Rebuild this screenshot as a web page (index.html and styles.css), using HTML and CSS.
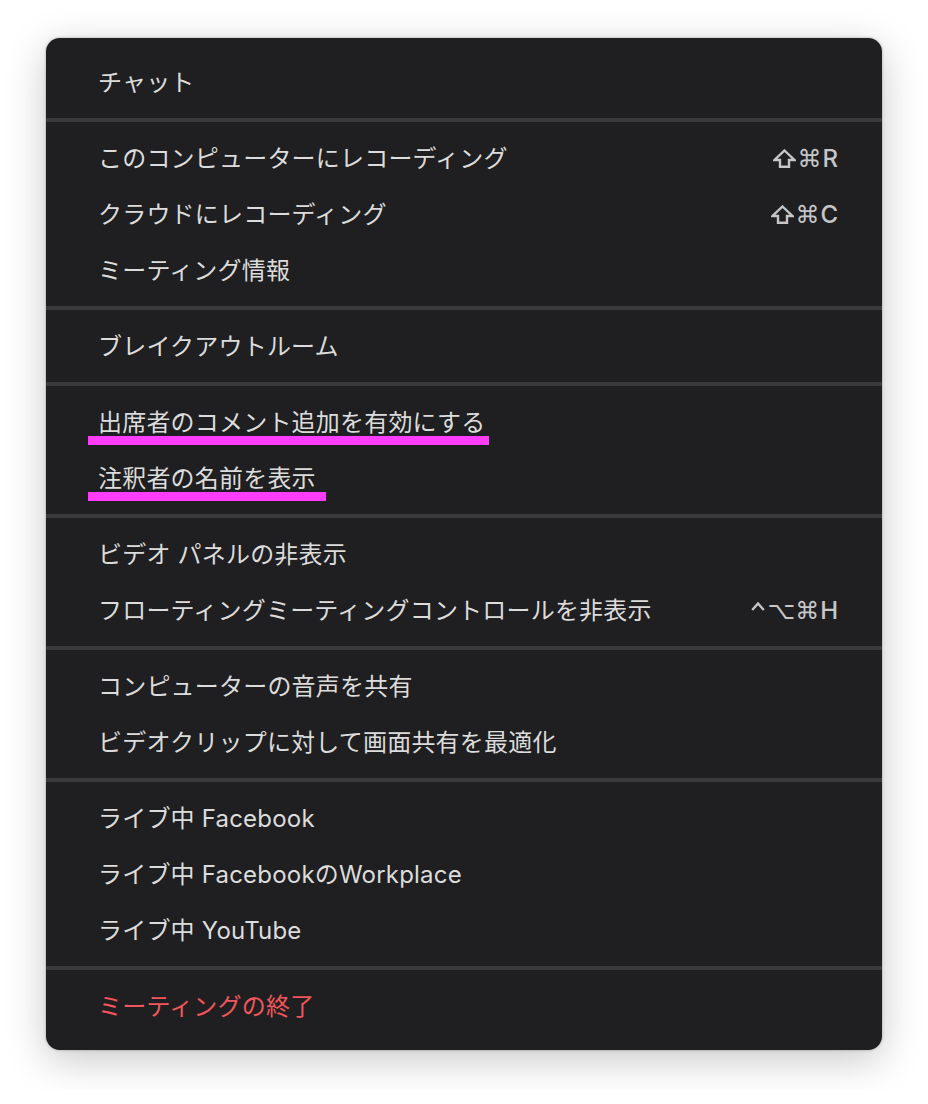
FILE: index.html
```html
<!DOCTYPE html>
<html lang="ja">
<head>
<meta charset="utf-8">
<link rel="stylesheet" href="styles.css">
</head>
<body>
<div class="menu">
  <div class="row"><span class="label">チャット</span></div>
  <div class="sep"></div>
  <div class="row"><span class="label">このコンピューターにレコーディング</span><span class="key"><svg class="shift" viewBox="0 0 23 19"><path d="M11.5 1.5 L21.5 11 L16 11 L16 17.8 L7 17.8 L7 11 L1.5 11 Z"/></svg><span class="sym">⌘</span>R</span></div>
  <div class="row"><span class="label">クラウドにレコーディング</span><span class="key"><svg class="shift" viewBox="0 0 23 19"><path d="M11.5 1.5 L21.5 11 L16 11 L16 17.8 L7 17.8 L7 11 L1.5 11 Z"/></svg><span class="sym">⌘</span>C</span></div>
  <div class="row"><span class="label">ミーティング情報</span></div>
  <div class="sep"></div>
  <div class="row"><span class="label">ブレイクアウトルーム</span></div>
  <div class="sep"></div>
  <div class="row"><span class="label marked mark-long">出席者のコメント追加を有効にする</span></div>
  <div class="row"><span class="label marked mark-short">注釈者の名前を表示</span></div>
  <div class="sep"></div>
  <div class="row"><span class="label">ビデオ パネルの非表示</span></div>
  <div class="row"><span class="label">フローティングミーティングコントロールを非表示</span><span class="key"><svg class="ctrl" viewBox="0 0 14 9"><path d="M1.2 8 L7 1.5 L12.8 8"/></svg><span class="sym">⌥⌘</span>H</span></div>
  <div class="sep"></div>
  <div class="row"><span class="label">コンピューターの音声を共有</span></div>
  <div class="row"><span class="label">ビデオクリップに対して画面共有を最適化</span></div>
  <div class="sep"></div>
  <div class="row"><span class="label">ライブ中 Facebook</span></div>
  <div class="row"><span class="label">ライブ中 FacebookのWorkplace</span></div>
  <div class="row"><span class="label">ライブ中 YouTube</span></div>
  <div class="sep"></div>
  <div class="row"><span class="label danger">ミーティングの終了</span></div>
</div>
</body>
</html>
```

FILE: styles.css
```css
html, body {
  margin: 0;
  padding: 0;
  background: #ffffff;
}
body {
  padding: 38px 46px 40px 46px;
  font-family: Inter, "Noto Sans CJK JP", sans-serif;
}
.menu {
  width: 836px;
  box-sizing: border-box;
  background: #1f1f21;
  border-radius: 14px;
  padding: 15px 0 17px 0;
  box-shadow: 0 10px 40px rgba(0, 0, 0, 0.22), 0 0 3px rgba(0, 0, 0, 0.3);
}
.row {
  height: 56px;
  box-sizing: border-box;
  padding: 3px 44px 0 52px;
  display: flex;
  align-items: center;
  justify-content: space-between;
}
.label {
  font-size: 24px;
  color: #dcdcdc;
  line-height: 1;
  letter-spacing: 0.2px;
  position: relative;
  white-space: nowrap;
}
.key {
  display: flex;
  align-items: center;
  font-size: 24px;
  font-weight: 500;
  color: #c6c6c8;
  line-height: 1;
  white-space: nowrap;
}
.sym {
  font-family: "DejaVu Sans", sans-serif;
  font-size: 24px;
  font-weight: 400;
  margin-right: 1px;
}
.shift {
  width: 23px;
  height: 19px;
  margin-right: 1px;
  fill: none;
  stroke: #c6c6c8;
  stroke-width: 2.4;
  stroke-linejoin: miter;
}
.ctrl {
  width: 14px;
  height: 9px;
  margin-right: 2px;
  margin-bottom: 8px;
  fill: none;
  stroke: #c6c6c8;
  stroke-width: 2.4;
}
.danger {
  color: #f2555a;
}
.marked::after {
  content: "";
  position: absolute;
  left: -10px;
  top: 25px;
  height: 9px;
  background: #fd3dfb;
}
.mark-long::after {
  width: 401px;
}
.mark-short::after {
  width: 238px;
}
.sep {
  height: 4px;
  background: #3a3a3c;
  margin: 9px 0 7px 0;
}
```
